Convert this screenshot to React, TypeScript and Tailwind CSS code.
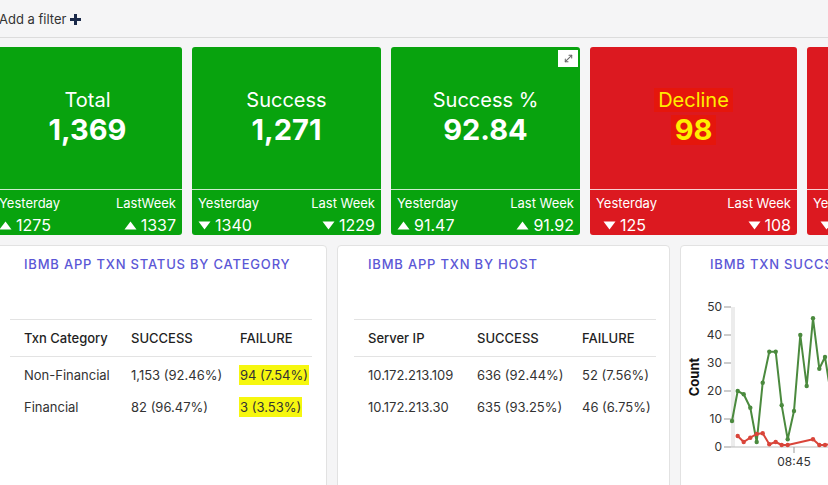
import React from 'react';
import { MoveDiagonal } from 'lucide-react';

type Stat = {
  title: string;
  value: string;
  yesterday: string;
  lastWeekLabel: string;
  lastWeek: string;
  yUp: boolean;
  wUp: boolean;
  red?: boolean;
  wide?: boolean;
  expand?: boolean;
};

const STATS: Stat[] = [
  { title: 'Total', value: '1,369', yesterday: '1275', lastWeekLabel: 'LastWeek', lastWeek: '1337', yUp: true, wUp: true },
  { title: 'Success', value: '1,271', yesterday: '1340', lastWeekLabel: 'Last Week', lastWeek: '1229', yUp: false, wUp: false },
  { title: 'Success %', value: '92.84', yesterday: '91.47', lastWeekLabel: 'Last Week', lastWeek: '91.92', yUp: true, wUp: true, expand: true },
  { title: 'Decline', value: '98', yesterday: '125', lastWeekLabel: 'Last Week', lastWeek: '108', yUp: false, wUp: false, red: true, wide: true },
  { title: 'Decline %', value: '7.16', yesterday: '8.53', lastWeekLabel: 'Last Week', lastWeek: '8.08', yUp: false, wUp: false, red: true },
];

function Arrow({ up }: { up: boolean }) {
  return (
    <svg width="13" height="9" viewBox="0 0 13 9" className="shrink-0">
      {up ? <path d="M6.5 0.5 L12.5 8.5 L0.5 8.5 Z" fill="white" /> : <path d="M0.5 0.5 L12.5 0.5 L6.5 8.5 Z" fill="white" />}
    </svg>
  );
}

function StatCard({ s }: { s: Stat }) {
  return (
    <div
      className={`relative flex h-[188px] shrink-0 flex-col rounded-[3px] text-white ${s.wide ? 'w-[207px]' : 'w-[189px]'} ${
        s.red ? 'bg-[#dc1920]' : 'bg-[#08a30e]'
      }`}
    >
      {s.expand && (
        <div className="absolute right-[2px] top-[3px] flex h-[17px] w-[20px] items-center justify-center bg-white">
          <MoveDiagonal size={11} strokeWidth={2.2} className="text-[#666]" />
        </div>
      )}
      <div className="flex flex-1 flex-col items-center justify-center pb-[4px]">
        {s.red ? (
          <>
            <span className="bg-[#e5160c] px-[4px] text-[20px] leading-[24px] text-[#ffee00]">{s.title}</span>
            <span className="mt-[3px] bg-[#e5160c] px-[4px] text-[29px] font-bold leading-[30px] text-[#ffee00]">{s.value}</span>
          </>
        ) : (
          <>
            <span className="text-[20px] leading-[24px]">{s.title}</span>
            <span className="mt-[3px] text-[29px] font-bold leading-[30px]">{s.value}</span>
          </>
        )}
      </div>
      <div className="flex h-[46px] justify-between border-t border-white/80 px-[6px] pt-[5px]">
        <div className="flex flex-col">
          <span className="text-[13px] leading-[17px]">Yesterday</span>
          <span className={`mt-[3px] flex items-center gap-[4px] text-[16px] leading-[20px] ${s.red ? 'pl-[7px]' : ''}`}>
            <Arrow up={s.yUp} />
            {s.yesterday}
          </span>
        </div>
        <div className="flex flex-col items-end">
          <span className="text-[13px] leading-[17px]">{s.lastWeekLabel}</span>
          <span className="mt-[3px] flex items-center gap-[4px] text-[16px] leading-[20px]">
            <Arrow up={s.wUp} />
            {s.lastWeek}
          </span>
        </div>
      </div>
    </div>
  );
}

function Hl({ children }: { children: React.ReactNode }) {
  return <span className="-ml-[1px] bg-[#f6f70f] px-[1px] py-[2px]">{children}</span>;
}

type Row = [string, string, React.ReactNode];

function TablePanel({
  title,
  width,
  cols,
  headers,
  rows,
}: {
  title: string;
  width: string;
  cols: string;
  headers: string[];
  rows: Row[];
}) {
  return (
    <div className={`h-[260px] shrink-0 rounded-[4px] border border-[#e2e2e2] bg-white ${width}`}>
      <div className="pl-[30px] pt-[10px] text-[13px] font-medium uppercase leading-[16px] tracking-[0.8px] text-[#5b57d6]">
        {title}
      </div>
      <div className="ml-[16px] mt-[47px] w-[302px] text-[13px] leading-[16px]">
        <div className={`grid border-y border-[#e3e3e3] py-[10px] font-medium text-[#1f1f1f] ${cols}`}>
          {headers.map((h) => (
            <span key={h} className="pl-[14px]">
              {h}
            </span>
          ))}
        </div>
        <div className="flex flex-col gap-[16px] pt-[10px] text-[#333]">
          {rows.map((r, i) => (
            <div key={i} className={`grid ${cols}`}>
              <span className="pl-[14px]">{r[0]}</span>
              <span className="pl-[14px]">{r[1]}</span>
              <span className="pl-[14px]">{r[2]}</span>
            </div>
          ))}
        </div>
      </div>
    </div>
  );
}

const GREEN: [number, number][] = [
  [51, 130], [56.7, 100], [62.7, 103.3], [69.3, 116.7], [75.7, 151], [81.7, 91.7], [88.3, 60.7], [94.7, 60.7],
  [100.7, 114.3], [106.7, 148.3], [113, 120], [119.3, 44], [125.7, 95], [132, 27.3], [138.3, 77.7], [144, 66],
  [150, 104], [156, 90], [162, 70],
];
const RED: [number, number][] = [
  [56.7, 145], [62.7, 151], [69.3, 146.7], [75.7, 143], [81.7, 142.3], [88.3, 153.3], [94.7, 151], [100.7, 154],
  [106.7, 154], [132, 148.3], [138.3, 154], [144, 154], [150, 153], [156, 152],
];

function Chart() {
  const toPath = (pts: [number, number][]) => pts.map((p, i) => `${i ? 'L' : 'M'}${p[0]} ${p[1]}`).join(' ');
  return (
    <svg width="333" height="195" viewBox="0 0 333 195" className="mt-[19px] block">
      <rect x="50" y="16" width="4" height="140" fill="#ececec" />
      <line x1="50" y1="156" x2="333" y2="156" stroke="#bbb" strokeWidth="1" />
      {[0, 10, 20, 30, 40, 50].map((v) => {
        const y = 156 - v * 2.8;
        return (
          <g key={v}>
            <line x1="43" y1={y} x2="50" y2={y} stroke="#999" strokeWidth="1" />
            <text x="41" y={y + 4} textAnchor="end" fontSize="12" fill="#333" fontFamily="Inter, sans-serif">
              {v}
            </text>
          </g>
        );
      })}
      <line x1="113" y1="156" x2="113" y2="162" stroke="#999" strokeWidth="1" />
      <text x="113" y="175" textAnchor="middle" fontSize="12" fill="#333" fontFamily="Inter, sans-serif">
        08:45
      </text>
      <text
        x="18"
        y="86"
        transform="rotate(-90 18 86)"
        textAnchor="middle"
        fontSize="13"
        fontWeight="700"
        fill="#111"
        fontFamily="Inter, sans-serif"
      >
        Count
      </text>
      <path d={toPath(GREEN)} fill="none" stroke="#4b8a3e" strokeWidth="2" strokeLinejoin="round" />
      {GREEN.map((p, i) => (
        <circle key={i} cx={p[0]} cy={p[1]} r="2.2" fill="#4b8a3e" />
      ))}
      <path d={toPath(RED)} fill="none" stroke="#d9453a" strokeWidth="2" strokeLinejoin="round" />
      {RED.map((p, i) => (
        <circle key={i} cx={p[0]} cy={p[1]} r="2.2" fill="#d9453a" />
      ))}
    </svg>
  );
}

export default function App() {
  return (
    <div className="h-[485px] w-[828px] overflow-hidden bg-[#f5f5f6] font-['Inter',sans-serif]">
      <div className="-ml-[7px] w-[1100px]">
        <div className="flex h-[38px] items-center border-b border-[#dcdcdc] pl-[6px] pt-[2px] text-[13px] text-[#333]">
          <span>Add a filter</span>
          <svg width="11" height="11" viewBox="0 0 11 11" className="ml-[4px]">
            <rect x="4" y="0" width="3" height="11" fill="#1b2a4a" />
            <rect x="0" y="4" width="11" height="3" fill="#1b2a4a" />
          </svg>
        </div>
        <div className="mt-[9px] flex gap-[10px]">
          {STATS.map((s) => (
            <StatCard key={s.title} s={s} />
          ))}
        </div>
        <div className="mt-[10px] flex gap-[10px]">
          <TablePanel
            title="IBMB APP TXN STATUS BY CATEGORY"
            width="w-[334px]"
            cols="grid-cols-[107px_109px_86px]"
            headers={['Txn Category', 'SUCCESS', 'FAILURE']}
            rows={[
              ['Non-Financial', '1,153 (92.46%)', <Hl>94 (7.54%)</Hl>],
              ['Financial', '82 (96.47%)', <Hl>3 (3.53%)</Hl>],
            ]}
          />
          <TablePanel
            title="IBMB APP TXN BY HOST"
            width="w-[333px]"
            cols="grid-cols-[109px_105px_88px]"
            headers={['Server IP', 'SUCCESS', 'FAILURE']}
            rows={[
              ['10.172.213.109', '636 (92.44%)', '52 (7.56%)'],
              ['10.172.213.30', '635 (93.25%)', '46 (6.75%)'],
            ]}
          />
          <div className="h-[260px] w-[333px] shrink-0 rounded-[4px] border border-[#e2e2e2] bg-white">
            <div className="pl-[29px] pt-[10px] text-[13px] font-medium uppercase leading-[16px] tracking-[0.8px] text-[#5b57d6]">
              IBMB TXN SUCCSS VS FAILURE TREND
            </div>
            <Chart />
          </div>
        </div>
      </div>
    </div>
  );
}
